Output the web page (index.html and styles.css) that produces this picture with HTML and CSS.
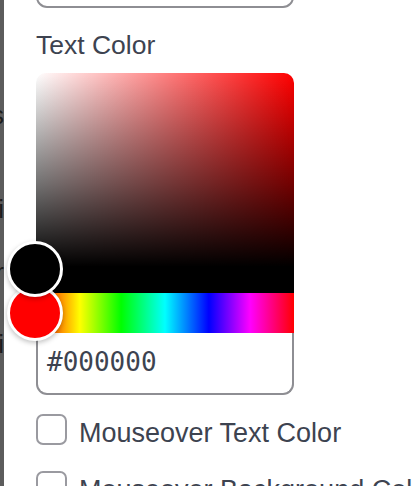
FILE: index.html
```html
<!DOCTYPE html>
<html lang="en">
<head>
  <meta charset="UTF-8">
  <meta name="viewport" content="width=device-width, initial-scale=1.0">
  <title>Text Color</title>
  <link rel="stylesheet" href="styles.css">
</head>
<body>
  <div class="backdrop">
    <div class="peek peek-1">Colors</div>
    <div class="peek peek-2">Fi</div>
    <div class="peek peek-3">Bor</div>
    <div class="peek peek-4">Ui</div>
  </div>

  <div class="panel">
    <div class="field-prev"></div>

    <label class="field-label">Text Color</label>

    <div class="picker">
      <div class="saturation">
        <div class="pointer pointer-sat"></div>
      </div>
      <div class="hue">
        <div class="pointer pointer-hue"></div>
      </div>
      <div class="hex-input">#000000</div>
    </div>

    <div class="check-row first-row">
      <span class="checkbox"></span>
      <span class="check-label">Mouseover Text Color</span>
    </div>
    <div class="check-row">
      <span class="checkbox"></span>
      <span class="check-label">Mouseover Background Color</span>
    </div>
  </div>
</body>
</html>
```

FILE: styles.css
```css
body {
  margin: 0;
  display: flex;
  height: 486px;
  overflow: hidden;
  font-family: "Liberation Sans", Arial, sans-serif;
  color: #3d4350;
  background: #fff;
}
.backdrop {
  width: 4px;
  flex-shrink: 0;
  background: #5c5c5c;
  overflow: hidden;
  font-size: 26px;
  line-height: 30px;
  color: #1c1c1c;
}
.peek {
  width: 4px;
  direction: rtl;
  white-space: nowrap;
  text-align: right;
}
.peek-1 { margin-top: 100px; }
.peek-2 { margin-top: 64px; }
.peek-3 { margin-top: 33px; }
.peek-4 { margin-top: 42px; }
.panel {
  flex: 1;
  padding-left: 32px;
  min-width: 0;
}
.field-prev {
  width: 258px;
  height: 48px;
  margin-top: -40px;
  border: 2px solid #8e8e93;
  border-radius: 11px;
  box-sizing: border-box;
}
.field-label {
  display: block;
  margin-top: 22px;
  font-size: 26.5px;
  line-height: 31px;
}
.picker {
  position: relative;
  width: 258px;
  margin-top: 12px;
}
.saturation {
  height: 220px;
  border-radius: 10px 10px 0 0;
  background:
    linear-gradient(to top, #000 12%, rgba(0, 0, 0, 0.55) 50%, rgba(0, 0, 0, 0)),
    linear-gradient(to right, #fff, #f00);
}
.hue {
  height: 40px;
  background: linear-gradient(to right, #f00 0%, #ff0 17%, #0f0 33%, #0ff 50%, #00f 67%, #f0f 83%, #f00 100%);
}
.pointer {
  position: absolute;
  width: 56px;
  height: 56px;
  border: 3px solid #fff;
  border-radius: 50%;
  box-sizing: border-box;
  box-shadow: 0 2px 5px rgba(0, 0, 0, 0.25);
  left: -29px;
}
.pointer-sat {
  top: 168px;
  background: #000;
  z-index: 2;
}
.pointer-hue {
  top: 212px;
  background: #f00;
  z-index: 1;
}
.hex-input {
  height: 62px;
  box-sizing: border-box;
  padding: 14px 0 0 9px;
  border: 2px solid #8e8e93;
  border-top: none;
  border-radius: 0 0 11px 11px;
  font-family: "DejaVu Sans Mono", "Liberation Mono", monospace;
  font-size: 26px;
  line-height: 30px;
}
.check-row {
  display: flex;
  align-items: flex-start;
  gap: 12px;
  height: 57px;
  white-space: nowrap;
}
.first-row {
  margin-top: 19px;
}
.checkbox {
  flex-shrink: 0;
  width: 31px;
  height: 31px;
  border: 2px solid #9a9aa0;
  border-radius: 7px;
  box-sizing: border-box;
}
.check-label {
  margin-top: 4px;
  font-size: 27px;
  line-height: 31px;
}
```
